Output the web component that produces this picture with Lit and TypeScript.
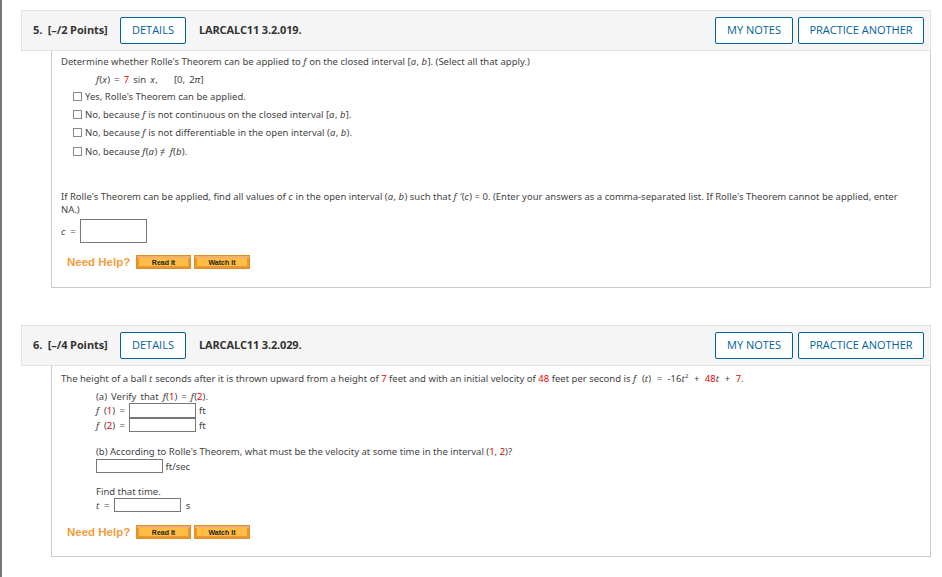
import { LitElement, html, css } from "lit";
import { customElement } from "lit/decorators.js";

const i = (s: string) => html`<i>${s}</i>`;
const r = (s: string) => html`<span class="r">${s}</span>`;

@customElement("app-root")
export class AppRoot extends LitElement {
  static styles = css`
    :host { display: block; height: 577px; box-sizing: border-box; overflow: hidden; background: #fff;
      border-left: 2px solid #777; padding: 10px 11px 0 19px; font-family: "Noto Sans", sans-serif; color: #444; }
    .q + .q { margin-top: 37px; }
    .head { height: 39px; border: 1px solid #e2e2e2; background: #f5f5f5; display: flex; align-items: center; padding: 0 6px 0 11px; font-family: "Open Sans", sans-serif; font-size: 11px; font-weight: 700; color: #333; }
    .num { width: 87px; white-space: pre; padding-bottom: 2px; letter-spacing: -0.1px; }
    .btn { box-sizing: border-box; height: 27px; padding-bottom: 2px; border: 1px solid #00629b; border-radius: 2px; background: #fff; color: #00629b; font-size: 11px; display: flex; align-items: center; justify-content: center; font-weight: 400; letter-spacing: 0; }
    .det { width: 66px; }
    .code { margin-left: 13px; flex: 1; padding-bottom: 2px; letter-spacing: -0.15px; }
    .notes { width: 78px; margin-right: 5px; }
    .prac { width: 126px; }
    .body { display: flow-root; margin-left: 30px; border: 1px solid #ccc; border-top: 0; padding: 0 0 0 9px; font-size: 9.5px; line-height: 13px; }
    .b1 { height: 236px; }
    .b2 { height: 190px; }
    .l { white-space: pre; }
    .row { display: flex; align-items: center; white-space: pre; }
    .ind { margin-left: 35px; }
    .ck { width: 7px; height: 7px; border: 1px solid #888; margin-right: 3px; margin-left: 12px; background: #fff; }
    .in { box-sizing: border-box; width: 67px; border: 1px solid #777; background: #fff; }
    .h24 { height: 24px; }
    .h15 { height: 15px; }
    .h14 { height: 14px; }
    .r { color: #e00; }
    i { padding-right: 0.4px; }
    .eq { word-spacing: 2px; }
    .eqw { word-spacing: 3px; }
    .eqn { word-spacing: 1.6px; }
    .m1 { margin-top: 1px; } .m3 { margin-top: 3px; } .m4 { margin-top: 4px; } .m5 { margin-top: 5px; } .m6 { margin-top: 6px; }
    .m12 { margin-top: 12px; } .m13 { margin-top: 13px; } .m32 { margin-top: 32px; }
    sup { font-size: 6px; line-height: 0; }
    .help { display: flex; align-items: center; margin-left: 6px; }
    .nh { font-family: "Liberation Sans", sans-serif; font-weight: 700; font-size: 11.5px; color: #f39c3c; width: 69px; }
    .oi { box-sizing: border-box; width: 55px; height: 14px; margin-right: 3px; background: #ffbd45; border: 1px solid #e08d2a; box-shadow: inset 0 2px 0 #efb070, inset 2px 0 0 #e9972f, inset -2px 0 0 #e9972f, inset 0 -2px 0 #e9972f; color: #222; font: 700 7px "Liberation Sans", sans-serif; display: flex; align-items: center; justify-content: center; }
    .oi.w { width: 56px; margin-right: 0; }
  `;

  header(n: string, pts: string, code: string) {
    return html`<div class="head">
      <span class="num">${n}.  [–/${pts} Points]</span>
      <div class="btn det">DETAILS</div>
      <span class="code">${code}</span>
      <div class="btn notes">MY NOTES</div>
      <div class="btn prac">PRACTICE ANOTHER</div>
    </div>`;
  }

  help() {
    return html`<div class="help"><span class="nh">Need Help?</span><div class="oi">Read It</div><div class="oi w">Watch It</div></div>`;
  }

  render() {
    return html`
      <div class="q">
        ${this.header("5", "2", "LARCALC11 3.2.019.")}
        <div class="body b1">
          <div class="l m4">Determine whether Rolle's Theorem can be applied to ${i("f")} on the closed interval [${i("a")}, ${i("b")}]. (Select all that apply.)</div>
          <div class="l ind m5 eqn">${i("f")}(${i("x")}) = ${r("7")} sin ${i("x")},    [0, 2${i("π")}]</div>
          <div class="row m4"><span class="ck"></span><span>Yes, Rolle's Theorem can be applied.</span></div>
          <div class="row m5"><span class="ck"></span><span>No, because ${i("f")} is not continuous on the closed interval [${i("a")}, ${i("b")}].</span></div>
          <div class="row m5"><span class="ck"></span><span>No, because ${i("f")} is not differentiable in the open interval (${i("a")}, ${i("b")}).</span></div>
          <div class="row m6"><span class="ck"></span><span>No, because ${i("f")}(${i("a")}) <span class="eq">≠ </span>${i("f")}(${i("b")}).</span></div>
          <div class="l m32">If Rolle's Theorem can be applied, find all values of ${i("c")} in the open interval (${i("a")}, ${i("b")}) such that ${i("f ")}′(${i("c")}) = 0. (Enter your answers as a comma-separated list. If Rolle's Theorem cannot be applied, enter</div>
          <div class="l">NA.)</div>
          <div class="row m3"><span class="eq">${i("c")} = </span><span class="in h24"></span></div>
          <div class="m12">${this.help()}</div>
        </div>
      </div>
      <div class="q">
        ${this.header("6", "4", "LARCALC11 3.2.029.")}
        <div class="body b2">
          <div class="l m6">The height of a ball ${i("t")} seconds after it is thrown upward from a height of ${r("7")} feet and with an initial velocity of ${r("48")} feet per second is <span class="eqw">${i("f")} (${i("t")}) = -16${i("t")}<sup>2</sup> + ${r("48")}${i("t")} + ${r("7")}.</span></div>
          <div class="l ind m5 eqn">(a) Verify that ${i("f")}(${r("1")}) = ${i("f")}(${r("2")}).</div>
          <div class="row ind"><span class="eq">${i("f ")}(${r("1")}) = </span><span class="in h15"></span><span> ft</span></div>
          <div class="row ind"><span class="eq">${i("f ")}(${r("2")}) = </span><span class="in h14"></span><span> ft</span></div>
          <div class="l ind m13">(b) According to Rolle's Theorem, what must be the velocity at some time in the interval (${r("1")}, ${r("2")})?</div>
          <div class="row ind m1"><span class="in h14"></span><span> ft/sec</span></div>
          <div class="l ind m12">Find that time.</div>
          <div class="row ind"><span class="eq">${i("t")} = </span><span class="in h14"></span><span>  s</span></div>
          <div class="m13">${this.help()}</div>
        </div>
      </div>`;
  }
}
